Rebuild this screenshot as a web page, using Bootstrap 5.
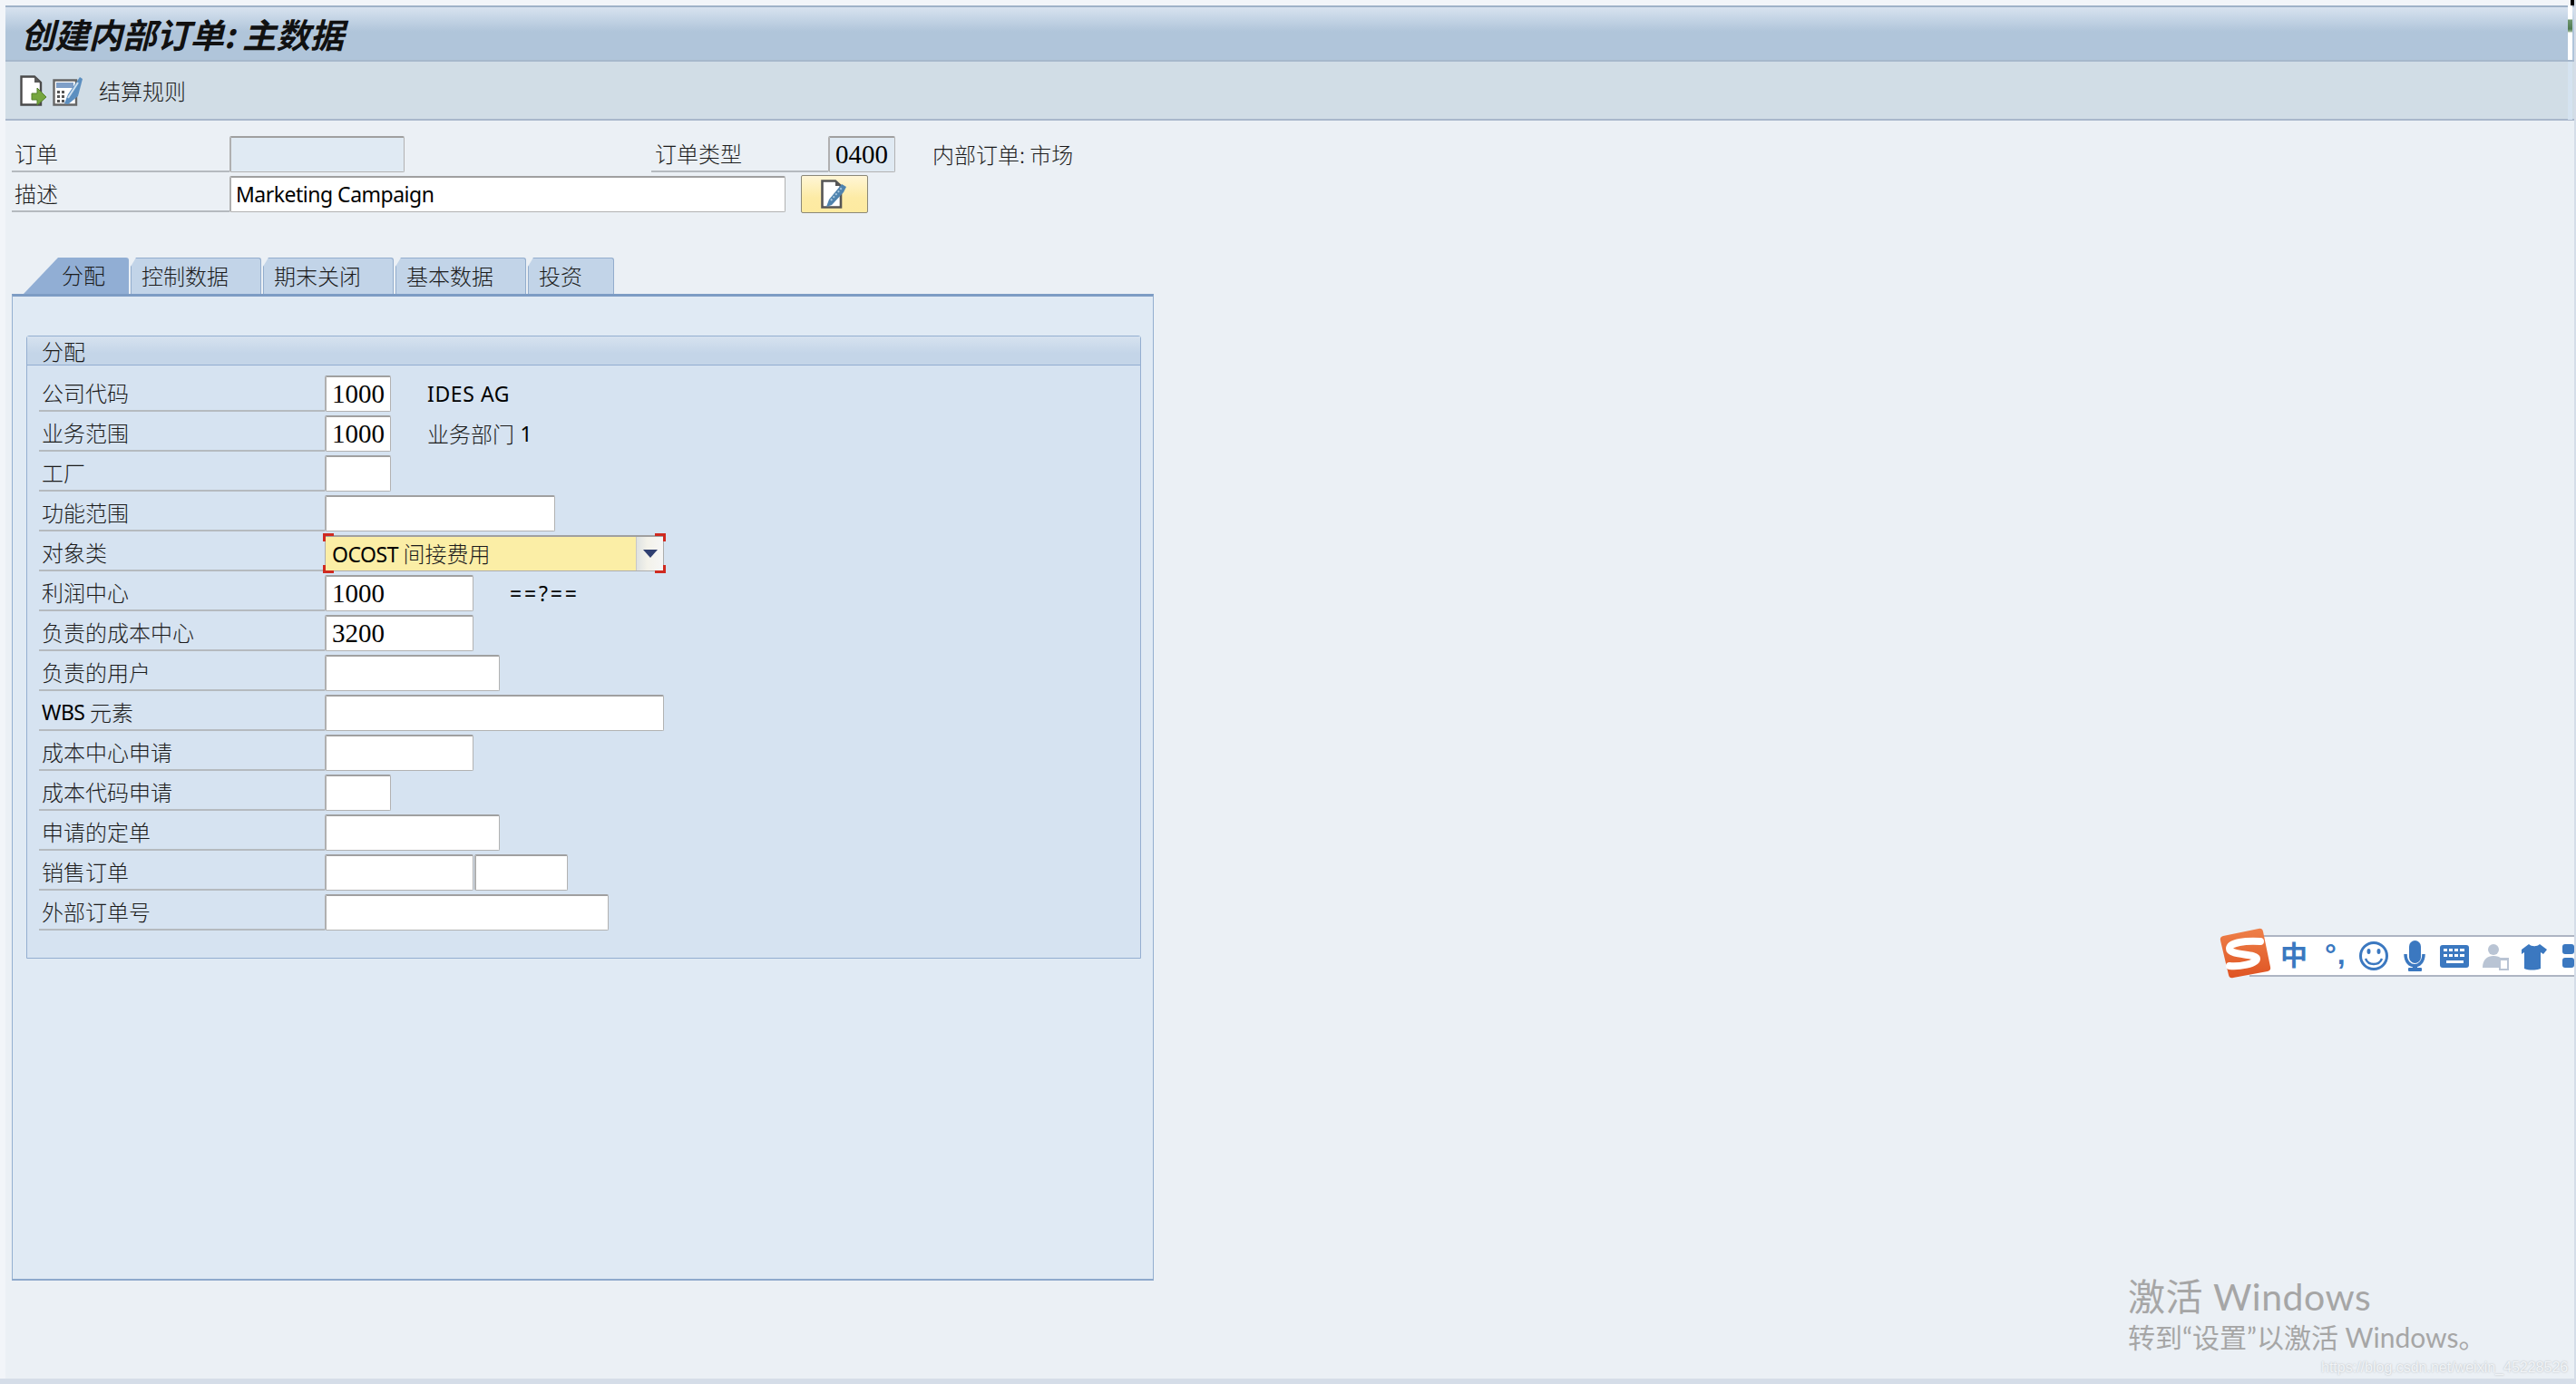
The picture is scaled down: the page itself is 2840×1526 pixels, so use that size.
<!DOCTYPE html>
<html lang="zh-CN">
<head>
<meta charset="utf-8">
<title>创建内部订单: 主数据</title>
<link href="https://cdn.jsdelivr.net/npm/bootstrap@5.3.0/dist/css/bootstrap.min.css" rel="stylesheet">
<style>
html,body{margin:0;padding:0;overflow:hidden;background:#f0f3f8}
body{font-family:"Noto Sans","Noto Sans CJK SC",sans-serif;color:#1c1c1c}
.sap-shell{width:2840px;height:1526px;padding:6px 0 0 6px;border-right:2px solid #d5dde8;border-bottom:6px solid #d5dde8;position:relative;overflow:hidden;background:#f2f5f9}
.sap-win{height:100%;background:#ebf0f5}
.sap-title{height:62px;border-top:2px solid #9fb2c8;border-bottom:2px solid #a6b8cc;background:linear-gradient(#d7e2ef 0,#b0c5da 46%,#b0c5da 100%);padding-left:17px}
.sap-title h1{margin:0;font:italic 700 37.500px/1 "Noto Sans CJK SC",serif;color:#111;letter-spacing:-.2px}
.sap-tools{height:65px;background:#d1dde6;border-bottom:2px solid #a9b7cb;padding-left:16px;gap:6px}
.sap-tools .tool-label{margin-left:11px}
.sap-txt{font-family:"Noto Sans CJK SC",sans-serif;font-weight:300;font-size:24px;line-height:1;white-space:nowrap;color:#1c1c1c}
.sap-lat{font-family:"Noto Sans","Noto Sans CJK SC",sans-serif;font-size:23px;line-height:1;white-space:nowrap;color:#000;letter-spacing:-.5px}
.sap-lat .cjk{font-family:"Noto Sans CJK SC",sans-serif;font-weight:300;font-size:24px;letter-spacing:0;color:#1c1c1c}
.sap-lat.wide-a{letter-spacing:.6px}
.sap-lat.wide-b{letter-spacing:2.800px}
.sap-main{padding:17px 0 0 7px}
.frow{height:40px;margin-bottom:4px}
.flabel{height:40px;border-bottom:2px solid #b5babf;padding-left:3px}
.lab-a{width:240px}.lab-b{width:195px;padding-left:4px}.lab-c{width:315px}
.form-control.sap-in{height:40px;min-height:0;padding:0 0 0 6px;border-radius:2px;border:1px solid #b2b2b2;border-top:2px solid #a0a0a0;border-left:2px solid #b0b0b0;background:#fff;font:29px/37px "Liberation Serif",serif;color:#000;flex:none;box-shadow:none}
.form-control.sap-in.lat{font-family:"Noto Sans",sans-serif;font-size:23px;letter-spacing:-.5px;padding-left:5px}
.form-control.sap-in.ro{background:#e0eaf3}
.w72{width:73px}.w74{width:74px}.w103{width:103px}.w164{width:164px}.w193{width:193px}.w253{width:254px}.w313{width:313px}.w374{width:374px}.w613{width:613px}
.ml-1px{margin-left:1px}
.ml-40{margin-left:40px}.ml-41{margin-left:41px}.ml-272{margin-left:272px}.ml-17{margin-left:17px}
.sap-editbtn{width:74px;height:42px;margin-top:-1px;padding:0;border:1px solid #8a8778;border-radius:2px;background:linear-gradient(#fff6d6,#fdeba5 60%,#fdeaa0)}
.sap-editbtn:hover,.sap-editbtn:active{background:linear-gradient(#fff6d6,#fdeba5 60%,#fdeaa0);border-color:#8a8778}
.sap-tabs{margin:50px 0 0 13px;height:40px;gap:2px}
.sap-tab{height:40px;padding:7px 0 0 11px;background:#c2d4e8;border:1px solid #93adcd;border-bottom:0;border-radius:3px 3px 0 0;clip-path:polygon(6px 0,100% 0,100% 100%,0 100%,0 10px)}
.tab-on{width:116px;padding-left:42px;background:#91aed4;border:0;clip-path:polygon(38px 0,100% 0,100% 100%,0 100%)}
.tab-144{width:144px}.tab-95{width:95px}
.sap-panel{width:1259px;height:1088px;background:#e0eaf4;border:1px solid #94afd0;border-top:3px solid #7d9cc4;border-bottom:2px solid #8ea9cc;padding:43px 0 0 15px}
.sap-group{width:1229px;height:687px;background:#d6e3f1;border:1px solid #94aed0;border-radius:3px 3px 0 0}
.sap-ghead{height:32px;background:linear-gradient(#d6e2ef,#c4d5e8 60%);border-bottom:1px solid #92add0;padding-left:16px}
.sap-gbody{padding:11px 0 0 13px}
.sap-select{width:374px;height:40px;flex:none;border:1px solid #adadad;border-top:2px solid #a0a0a0;background:#fbeea6;padding-left:7px}
.sap-dd{width:30px;height:100%;margin-left:auto;background:linear-gradient(90deg,#dfe2e2,#f3f2ea 40%,#f6f6f6);border-left:1px solid #c8c8c8}
.sap-dd i{display:block;width:0;height:0;border:8px solid transparent;border-top:9px solid #2f3f70;border-bottom:0}
.sel-c{position:absolute;width:12px;height:9px;border:0 solid #cf2a20}
.c-tl{left:-3px;top:-4px;border-top-width:3px;border-left-width:3px}
.c-tr{right:-3px;top:-4px;border-top-width:3px;border-right-width:3px}
.c-bl{left:-3px;bottom:-3px;border-bottom-width:3px;border-left-width:3px}
.c-br{right:-3px;bottom:-3px;border-bottom-width:3px;border-right-width:3px}
.sap-scroll{position:absolute;left:2831px;top:6px;width:5px;height:60px;background:linear-gradient(#fff 0,#fff 15px,#6f9770 16px,#4f7a50 26px,#9fb99c 29px,#fff 30px,#fff 100%)}
.sap-scroll2{position:absolute;left:2831px;top:68px;width:5px;height:64px;background:#d5e3f0}
.sap-corner{position:absolute;left:2834px;top:0;width:4px;height:6px;background:#000}
.sap-ime{position:absolute;left:2480px;top:1031px;width:358px;height:46px;background:#fff;border-top:2px solid #aeb5c3;border-bottom:2px solid #aeb5c3;overflow:hidden}
.ime-logo{position:absolute;left:2446px;top:1023px}
.ime-zh{position:absolute;left:34px;top:3px;font:700 30px/36px "Liberation Sans","Noto Sans CJK SC",sans-serif;color:#3b78c0}
.ime-pt{position:absolute;left:83px;top:1px;font:700 32px/36px "Liberation Sans",sans-serif;color:#3b78c0;letter-spacing:1px}
.ime-ic{position:absolute;left:0;top:0}
.sap-wm{position:absolute;left:2346px;top:1405px;color:#a6a6a6;font-family:Lato,"Noto Sans CJK SC",sans-serif;font-weight:400}
.wm-a{font-size:41px;line-height:50px;white-space:nowrap;letter-spacing:.5px}
.wm-b{font-size:30px;line-height:38px;white-space:nowrap}
.sap-url{position:absolute;left:2559px;top:1498px;font:16px/20px "Liberation Sans",sans-serif;color:#f1f4f7;text-shadow:0 0 2px #aeb2b6;white-space:nowrap}
</style>
</head>
<body>
<div class="sap-shell">
 <div class="sap-win d-flex flex-column">
  <div class="sap-title d-flex align-items-center"><h1>创建内部订单: 主数据</h1></div>
  <div class="sap-tools d-flex align-items-center">
   <svg width="30" height="34" viewBox="0 0 30 34"><path d="M1.500 1.500H16L23 8V32.500H1.500Z" fill="#fff" stroke="#4a4a4a" stroke-width="2.400"/><path d="M16 1.500V8H23Z" fill="#5a5a5a"/><path d="M13 20h6v-6l10 10-10 9v-6h-6Z" fill="#76a63e" stroke="#55802b" stroke-width="1"/></svg>
   <svg width="34" height="34" viewBox="0 0 34 34"><path d="M1.500 5.500H26V32.500H1.500Z" fill="#fff" stroke="#666" stroke-width="2.400"/><rect x="4" y="8" width="19" height="6" fill="#7f9fc8"/><g fill="#555"><rect x="5" y="17" width="3" height="3"/><rect x="10" y="17" width="3" height="3"/><rect x="5" y="22" width="3" height="3"/><rect x="10" y="22" width="3" height="3"/><rect x="5" y="27" width="3" height="3"/><rect x="10" y="27" width="3" height="3"/></g><path d="M13 31l4-10L30 2l3 2-5 19-11 9Z" fill="#5c8fc0"/><path d="M17 25l11-17" stroke="#cfe0ef" stroke-width="2"/></svg>
   <span class="sap-txt tool-label">结算规则</span>
  </div>
  <div class="sap-main">
   <div class="frow d-flex">
    <div class="flabel lab-a d-flex align-items-center sap-txt">订单</div>
    <div class="form-control sap-in ro w193"></div>
    <div class="flabel lab-b ml-272 d-flex align-items-center sap-txt">订单类型</div>
    <div class="form-control sap-in ro w74">0400</div>
    <div class="ml-41 d-flex align-items-center sap-txt">内部订单: 市场</div>
   </div>
   <div class="frow d-flex">
    <div class="flabel lab-a d-flex align-items-center sap-txt">描述</div>
    <div class="form-control sap-in lat w613">Marketing Campaign</div>
    <button type="button" class="btn sap-editbtn ml-17 d-flex align-items-center justify-content-center" aria-label="编辑">
     <svg width="30" height="32" viewBox="0 0 30 32"><path d="M1.500 1.500H16L22 7V30.500H1.500Z" fill="#fff" stroke="#555" stroke-width="2.600"/><path d="M16 1.500V7H22Z" fill="#555"/><path d="M6 30l3-8L23 5l5 3-3 6-13 14Z" fill="#4f83ae"/><path d="M11 23l12-14" stroke="#a9c8e0" stroke-width="2" stroke-dasharray="2 2"/></svg>
    </button>
   </div>
   <div class="sap-tabs d-flex">
    <div class="sap-tab tab-on sap-txt">分配</div>
    <div class="sap-tab tab-144 sap-txt">控制数据</div>
    <div class="sap-tab tab-144 sap-txt">期末关闭</div>
    <div class="sap-tab tab-144 sap-txt">基本数据</div>
    <div class="sap-tab tab-95 sap-txt">投资</div>
   </div>
   <div class="sap-panel">
    <div class="sap-group">
     <div class="sap-ghead d-flex align-items-center sap-txt">分配</div>
     <div class="sap-gbody">
      <div class="frow d-flex"><div class="flabel lab-c d-flex align-items-center sap-txt">公司代码</div><div class="form-control sap-in w72">1000</div><div class="ml-40 d-flex align-items-center sap-lat wide-a">IDES AG</div></div>
      <div class="frow d-flex"><div class="flabel lab-c d-flex align-items-center sap-txt">业务范围</div><div class="form-control sap-in w72">1000</div><div class="ml-40 d-flex align-items-center sap-lat wide-a"><span class="cjk">业务部门</span>&nbsp;1</div></div>
      <div class="frow d-flex"><div class="flabel lab-c d-flex align-items-center sap-txt">工厂</div><div class="form-control sap-in w72"></div></div>
      <div class="frow d-flex"><div class="flabel lab-c d-flex align-items-center sap-txt">功能范围</div><div class="form-control sap-in w253"></div></div>
      <div class="frow d-flex"><div class="flabel lab-c d-flex align-items-center sap-txt">对象类</div>
       <div class="sap-select position-relative d-flex align-items-center sap-lat"><span>OCOST&nbsp;<span class="cjk">间接费用</span></span>
        <div class="sap-dd d-flex align-items-center justify-content-center"><i></i></div>
        <span class="sel-c c-tl"></span><span class="sel-c c-tr"></span><span class="sel-c c-bl"></span><span class="sel-c c-br"></span>
       </div>
      </div>
      <div class="frow d-flex"><div class="flabel lab-c d-flex align-items-center sap-txt">利润中心</div><div class="form-control sap-in w164">1000</div><div class="ml-40 d-flex align-items-center sap-lat wide-b">==?==</div></div>
      <div class="frow d-flex"><div class="flabel lab-c d-flex align-items-center sap-txt">负责的成本中心</div><div class="form-control sap-in w164">3200</div></div>
      <div class="frow d-flex"><div class="flabel lab-c d-flex align-items-center sap-txt">负责的用户</div><div class="form-control sap-in w193"></div></div>
      <div class="frow d-flex"><div class="flabel lab-c d-flex align-items-center sap-lat">WBS&nbsp;<span class="cjk">元素</span></div><div class="form-control sap-in w374"></div></div>
      <div class="frow d-flex"><div class="flabel lab-c d-flex align-items-center sap-txt">成本中心申请</div><div class="form-control sap-in w164"></div></div>
      <div class="frow d-flex"><div class="flabel lab-c d-flex align-items-center sap-txt">成本代码申请</div><div class="form-control sap-in w72"></div></div>
      <div class="frow d-flex"><div class="flabel lab-c d-flex align-items-center sap-txt">申请的定单</div><div class="form-control sap-in w193"></div></div>
      <div class="frow d-flex"><div class="flabel lab-c d-flex align-items-center sap-txt">销售订单</div><div class="form-control sap-in w164"></div><div class="form-control sap-in w103 ml-1px"></div></div>
      <div class="frow d-flex"><div class="flabel lab-c d-flex align-items-center sap-txt">外部订单号</div><div class="form-control sap-in w313"></div></div>
     </div>
    </div>
   </div>
  </div>
 </div>
 <div class="sap-corner"></div><div class="sap-scroll"></div><div class="sap-scroll2"></div>
 <div class="sap-ime">
  <span class="ime-zh">中</span>
  <span class="ime-pt">°,</span>
  <svg class="ime-ic" width="358" height="42" viewBox="0 0 358 42">
   <g fill="none" stroke="#3b78c0">
    <circle cx="137" cy="21" r="14.500" stroke-width="3"/>
    <path d="M128 24c3 8 15 8 18 0" stroke-width="2.400"/>
    <path d="M172 19c0 17 20 17 20 0" stroke-width="3.500"/>
   </g>
   <g fill="#3b78c0">
    <ellipse cx="131.500" cy="16" rx="2" ry="3"/><ellipse cx="142.500" cy="16" rx="2" ry="3"/>
    <rect x="176" y="4" width="13" height="25" rx="6.500"/><rect x="180" y="30" width="5" height="6"/><rect x="175" y="34" width="15" height="4" rx="1"/>
    <rect x="210" y="9" width="32" height="25" rx="3"/>
    <path d="M300 14l8-6c3 3 9 3 12 0l8 6-4 5-3-2v18c-5 2-13 2-18 0V17l-3 2Z"/>
    <rect x="345" y="8" width="13" height="11" rx="3"/><rect x="345" y="23" width="13" height="11" rx="3"/>
   </g>
   <g fill="#fff"><rect x="214" y="13" width="4" height="3"/><rect x="220" y="13" width="4" height="3"/><rect x="226" y="13" width="4" height="3"/><rect x="232" y="13" width="5" height="3"/><rect x="214" y="19" width="4" height="3"/><rect x="220" y="19" width="4" height="3"/><rect x="226" y="19" width="4" height="3"/><rect x="232" y="19" width="5" height="3"/><rect x="217" y="26" width="19" height="3"/></g>
   <g fill="#b9c4d4"><circle cx="269" cy="14" r="6"/><path d="M257 34c0-9 5-13 12-13 4 0 7 1 9 3v10Z"/><rect x="275" y="23" width="11" height="14"/></g>
   <rect x="277" y="26" width="7" height="9" fill="#fff"/>
  </svg>
 </div>
 <svg class="ime-logo" width="60" height="58" viewBox="0 0 60 58"><defs><linearGradient id="sg" x1="0" y1="0" x2="0" y2="1"><stop offset="0" stop-color="#ee8049"/><stop offset="1" stop-color="#df5423"/></linearGradient></defs><path d="M5 9Q1 10 2 14L11 52Q12 56 16 55L54 48Q58 47 57 43L49 4Q48 0 44 1Z" fill="url(#sg)"/><path d="M46 15C30 14 12 16 12 23C12 31 42 28 42 34C42 40 22 43 12 42" fill="none" stroke="#fff" stroke-width="8" stroke-linecap="round"/></svg>
 <div class="sap-wm"><div class="wm-a">激活 Windows</div><div class="wm-b">转到“设置”以激活 Windows。</div></div>
 <div class="sap-url">https://blog.csdn.net/weixin_45228526</div>
</div>
<script src="https://cdn.jsdelivr.net/npm/bootstrap@5.3.0/dist/js/bootstrap.bundle.min.js"></script>
</body>
</html>
